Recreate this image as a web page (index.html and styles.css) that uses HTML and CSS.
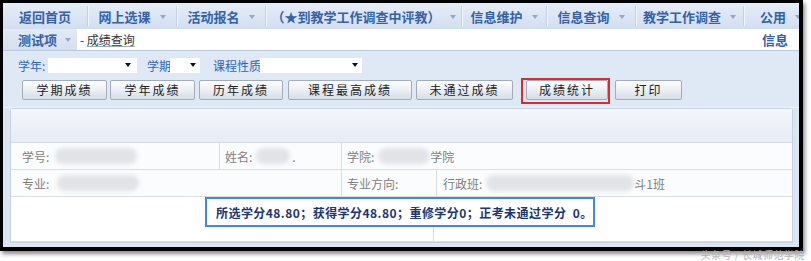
FILE: index.html
```html
<!DOCTYPE html>
<html lang="zh">
<head>
<meta charset="utf-8">
<title>成绩查询</title>
<link rel="stylesheet" href="styles.css">
</head>
<body>
<div class="frame">
  <div class="nav">
    <div class="nav-item w1">返回首页</div>
    <div class="nav-item w2">网上选课<span class="arr"></span></div>
    <div class="nav-item w2">活动报名<span class="arr"></span></div>
    <div class="nav-item w4">（★到教学工作调查中评教）<span class="arr"></span></div>
    <div class="nav-item w1">信息维护<span class="arr"></span></div>
    <div class="nav-item w2">信息查询<span class="arr"></span></div>
    <div class="nav-item w7">教学工作调查<span class="arr"></span></div>
    <div class="nav-item w8">公用<span class="arr"></span></div>
  </div>
  <div class="subnav">
    <div class="tab">测试项<span class="arr"></span></div>
    <div class="crumb">- <span class="crumb-link">成绩查询</span></div>
    <div class="sub-right">信息</div>
  </div>
  <div class="filters">
    <div class="filter-row">
      <span class="lbl l1">学年:</span>
      <span class="sel s1"><span class="sel-arr"></span></span>
      <span class="lbl l2">学期</span>
      <span class="sel s2"><span class="sel-arr"></span></span>
      <span class="lbl l3">课程性质</span>
      <span class="sel s3"><span class="sel-arr"></span></span>
    </div>
    <div class="btn-row">
      <button class="btn b1">学期成绩</button>
      <button class="btn b2">学年成绩</button>
      <button class="btn b3">历年成绩</button>
      <button class="btn b4">课程最高成绩</button>
      <button class="btn b5">未通过成绩</button>
      <button class="btn b6 marked">成绩统计</button>
      <button class="btn b7">打印</button>
    </div>
  </div>
  <div class="content">
    <div class="panel">
      <div class="panel-head"></div>
      <div class="row">
        <div class="cell c-xh">学号:<span class="blur bx1"></span></div>
        <div class="cell c-xm">姓名:<span class="blur bx2"></span><span class="dot">.</span></div>
        <div class="cell c-xy">学院:<span class="blur bx3"></span>学院</div>
      </div>
      <div class="row">
        <div class="cell c-zy">专业:<span class="blur bx4"></span></div>
        <div class="cell c-fx">专业方向:</div>
        <div class="cell c-bj">行政班:<span class="blur bx5"></span>斗1班</div>
      </div>
      <div class="summary-row">
        <div class="summary">所选学分48.80；获得学分48.80；重修学分0；正考未通过学分&nbsp;&nbsp;0。</div>
      </div>
      <div class="foot-row">
        <div class="foot-a"></div>
        <div class="foot-b"></div>
      </div>
    </div>
  </div>
</div>
<div class="watermark">头条号 / 长城师范学院</div>
</body>
</html>
```

FILE: styles.css
```css
html, body {
  margin: 0;
  padding: 0;
}
body {
  width: 811px;
  height: 261px;
  overflow: hidden;
  background: #ffffff;
  position: relative;
  font-family: "Noto Sans CJK SC", "Liberation Sans", sans-serif;
  font-size: 12px;
}
.frame {
  box-sizing: border-box;
  width: 803px;
  height: 251px;
  border-top: 3px solid #000;
  border-left: 3px solid #000;
  border-right: 4px solid #000;
  border-bottom: 4px solid #000;
  box-shadow: 2px 3px 4px rgba(0,0,0,0.45);
  overflow: hidden;
  display: flex;
  flex-direction: column;
  background: #dce6f3;
}
.nav {
  height: 26px;
  flex: none;
  display: flex;
  background: linear-gradient(#e6edf8, #d2def0);
  white-space: nowrap;
}
.nav-item {
  flex: none;
  box-sizing: border-box;
  display: flex;
  align-items: center;
  justify-content: center;
  color: #3462a6;
  font-weight: bold;
  font-size: 13px;
  border-right: 1px solid #c3d1e6;
  box-shadow: 1px 0 0 #f2f6fc;
  margin: 3px 0;
}
.w1 { width: 85px; }
.w2 { width: 89px; }
.w4 { width: 196px; }
.w7 { width: 108px; }
.w8 { width: 70px; border-right: none; box-shadow: none; justify-content: flex-start; padding-left: 16px; }
.arr {
  display: inline-block;
  width: 0;
  height: 0;
  border-left: 3.5px solid transparent;
  border-right: 3.5px solid transparent;
  border-top: 4px solid #93a8c6;
  margin-left: 9px;
  margin-top: 1px;
}
.subnav {
  height: 21px;
  flex: none;
  display: flex;
  align-items: stretch;
  background: #ffffff;
  border-bottom: 1px solid #b8c8de;
}
.tab {
  width: 74px;
  box-sizing: border-box;
  padding-left: 15px;
  display: flex;
  align-items: center;
  background: linear-gradient(#e2eaf6, #d3dff0);
  color: #3462a6;
  font-weight: bold;
  font-size: 13px;
  white-space: nowrap;
}
.tab .arr { margin-left: 8px; }
.crumb {
  flex: 1;
  display: flex;
  align-items: center;
  padding-left: 3px;
  color: #333;
  font-size: 12px;
  white-space: pre;
}
.crumb-link {
  text-decoration: underline;
  text-decoration-color: #9ab;
}
.sub-right {
  width: 37px;
  display: flex;
  align-items: center;
  color: #3462a6;
  font-weight: bold;
  font-size: 13px;
  white-space: nowrap;
}
.filters {
  flex: none;
  height: 57px;
  box-sizing: border-box;
  padding-top: 6px;
  background: #dfe8f5;
  border-bottom: 1px solid #eef3fa;
}
.filter-row {
  height: 16px;
  display: flex;
  align-items: center;
  padding-left: 15px;
  white-space: nowrap;
}
.lbl {
  flex: none;
  color: #2a68c0;
  font-size: 12px;
  white-space: nowrap;
}
.l1 { width: 30px; }
.l2 { margin-left: 10px; width: 23px; }
.l3 { margin-left: 13px; width: 47px; }
.sel {
  flex: none;
  height: 15px;
  background: #fff;
  display: flex;
  align-items: center;
  justify-content: flex-end;
  box-sizing: border-box;
}
.s1 { width: 89px; padding-right: 6px; }
.s2 { width: 30px; padding-right: 4px; }
.s3 { width: 102px; padding-right: 4px; }
.sel-arr {
  width: 0;
  height: 0;
  border-left: 3.5px solid transparent;
  border-right: 3.5px solid transparent;
  border-top: 4px solid #111;
}
.btn-row {
  margin-top: 7px;
  height: 20px;
  display: flex;
  padding-left: 19px;
}
.btn {
  flex: none;
  height: 20px;
  box-sizing: border-box;
  margin: 0;
  padding: 0;
  border: 1px solid #a3acb9;
  border-radius: 2px;
  background: linear-gradient(#fbfcfd, #eef1f5 45%, #d6dde7);
  font-family: "Noto Sans CJK SC", "Liberation Sans", sans-serif;
  font-size: 12px;
  letter-spacing: 2px;
  color: #222;
  line-height: 18px;
}
.b1 { width: 85px; }
.b2 { width: 85px; margin-left: 3px; }
.b3 { width: 84px; margin-left: 4px; }
.b4 { width: 124px; margin-left: 5px; }
.b5 { width: 97px; margin-left: 4px; }
.b6 { width: 82px; margin-left: 13px; }
.b7 { width: 67px; margin-left: 7px; }
.marked { position: relative; }
.marked::after {
  content: "";
  position: absolute;
  left: -6px;
  right: -3px;
  top: -3px;
  bottom: -5px;
  border: 2px solid #e02a2a;
}
.content {
  flex: 1;
  padding: 0 6px 4px 7px;
  background: #dce6f3;
  display: flex;
}
.panel {
  flex: 1;
  background: #fff;
  border: 1px solid #c5d2e3;
  border-radius: 3px 3px 0 0;
  display: flex;
  flex-direction: column;
}
.panel-head {
  height: 33px;
  background: linear-gradient(#f3f6fb, #e7edf5);
  border-bottom: 1px solid #d3dbe6;
}
.row {
  height: 26px;
  display: flex;
  border-bottom: 1px solid #d7dee8;
  background: #fbfcfd;
}
.cell {
  box-sizing: border-box;
  display: flex;
  align-items: center;
  padding-left: 11px;
  color: #808080;
  font-size: 12px;
  border-right: 1px solid #d7dee8;
  white-space: nowrap;
}
.cell:last-child { border-right: none; flex: 1; }
.c-xh { width: 209px; }
.c-xm { width: 122px; padding-left: 5px; }
.c-xy { padding-left: 5px; }
.c-zy { width: 331px; }
.c-fx { width: 95px; padding-left: 5px; }
.c-bj { padding-left: 6px; }
.blur {
  display: inline-block;
  height: 16px;
  border-radius: 8px;
  background: #e1e3e6;
  filter: blur(2px);
}
.bx1 { width: 82px; margin-left: 6px; }
.bx2 { width: 34px; margin-left: 4px; }
.dot { margin-left: 2px; }
.bx3 { width: 52px; margin-left: 4px; }
.bx4 { width: 82px; margin-left: 8px; }
.bx5 { width: 148px; margin-left: 4px; }
.summary-row {
  height: 30px;
  padding-left: 194px;
  display: flex;
}
.summary {
  width: 390px;
  box-sizing: border-box;
  height: 30px;
  border: 2px solid #3f8bd8;
  display: flex;
  align-items: center;
  padding-left: 9px;
  color: #1b3570;
  font-weight: bold;
  font-size: 12px;
  letter-spacing: 0.45px;
  white-space: nowrap;
  background: #fff;
}
.foot-row {
  flex: 1;
  display: flex;
  border-bottom: 1px solid #d7dee8;
}
.foot-a {
  width: 422px;
  border-right: 1px solid #d7dee8;
}
.foot-b { flex: 1; }
.watermark {
  position: absolute;
  right: 6px;
  bottom: 1px;
  font-size: 10px;
  line-height: 11px;
  color: #b5b5b5;
  letter-spacing: 0.5px;
  font-family: "Noto Sans CJK SC", sans-serif;
}
```
